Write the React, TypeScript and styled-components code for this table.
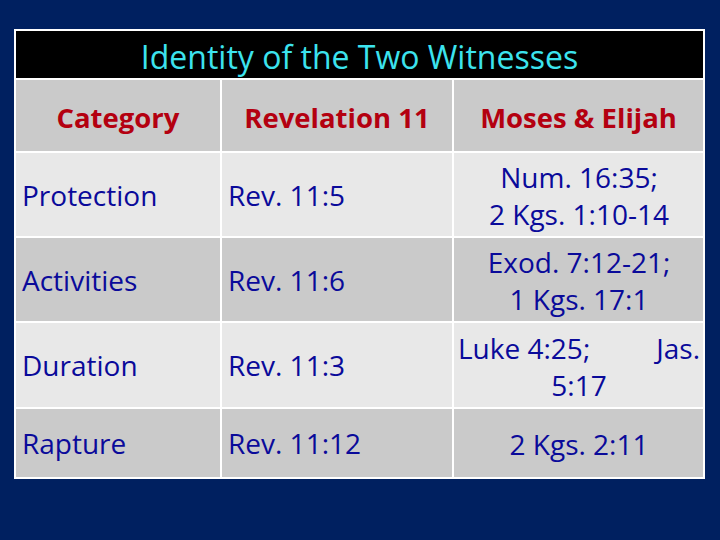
import { createGlobalStyle } from 'styled-components';
import styled from 'styled-components';

const GlobalStyle = createGlobalStyle`
	html, body {
		margin: 0;
		padding: 0;
		background: #002060;
	}
	body {
		font-family: "Open Sans", Lato, sans-serif;
		font-variant-ligatures: none;
	}
`;

const rows = [
	{ category: 'Protection', rev: 'Rev. 11:5', ref: ['Num. 16:35;', '2 Kgs. 1:10-14'] },
	{ category: 'Activities', rev: 'Rev. 11:6', ref: ['Exod. 7:12-21;', '1 Kgs. 17:1'] },
	{ category: 'Duration', rev: 'Rev. 11:3', ref: [] as string[] },
	{ category: 'Rapture', rev: 'Rev. 11:12', ref: ['2 Kgs. 2:11'] },
];

const App = () => {
	return (
		<>
			<GlobalStyle />
			<Slide>
				<Table>
					<Title>Identity of the Two Witnesses</Title>
					<HeadCell>Category</HeadCell>
					<HeadCell>Revelation 11</HeadCell>
					<HeadCell>Moses &amp; Elijah</HeadCell>
					{rows.map((row, i) => {
						const shade = i % 2 === 1;
						return [
							<Cell key={`c${i}`} $dark={shade}>
								{row.category}
							</Cell>,
							<Cell key={`r${i}`} $dark={shade}>
								{row.rev}
							</Cell>,
							<RefCell key={`m${i}`} $dark={shade}>
								{row.category === 'Duration' ? (
									<>
										<SpreadLine>
											<span>Luke 4:25;</span>
											<span>Jas.</span>
										</SpreadLine>
										<div>5:17</div>
									</>
								) : (
									row.ref.map((line) => <div key={line}>{line}</div>)
								)}
							</RefCell>,
						];
					})}
				</Table>
			</Slide>
		</>
	);
};

export default App;

const Slide = styled.div`
	width: 720px;
	height: 540px;
	box-sizing: border-box;
	padding: 29px 0 0 14px;
`;

const Table = styled.div`
	width: 691px;
	box-sizing: border-box;
	border: 2px solid #ffffff;
	background: #ffffff;
	display: grid;
	grid-template-columns: 204px 230px 1fr;
	grid-template-rows: 47px 71px 83px 83px 84px 68px;
	gap: 2px;
`;

const Title = styled.div`
	grid-column: 1 / -1;
	background: #000000;
	color: #3ce3ee;
	font-size: 32px;
	display: flex;
	align-items: center;
	justify-content: center;
	padding-top: 4px;
`;

const HeadCell = styled.div`
	background: #cacaca;
	color: #b40010;
	font-weight: bold;
	font-size: 27.5px;
	display: flex;
	align-items: center;
	justify-content: center;
	padding-top: 3px;
`;

const Cell = styled.div<{ $dark?: boolean }>`
	background: ${({ $dark }) => ($dark ? '#cacaca' : '#e8e8e8')};
	color: #0a0a9a;
	font-size: 28px;
	display: flex;
	align-items: center;
	padding: 0 0 0 6px;
`;

const RefCell = styled(Cell)`
	flex-direction: column;
	justify-content: center;
	align-items: stretch;
	text-align: center;
	line-height: 37px;
	padding: 3px 3px 0 4px;
`;

const SpreadLine = styled.div`
	display: flex;
	justify-content: space-between;
`;
